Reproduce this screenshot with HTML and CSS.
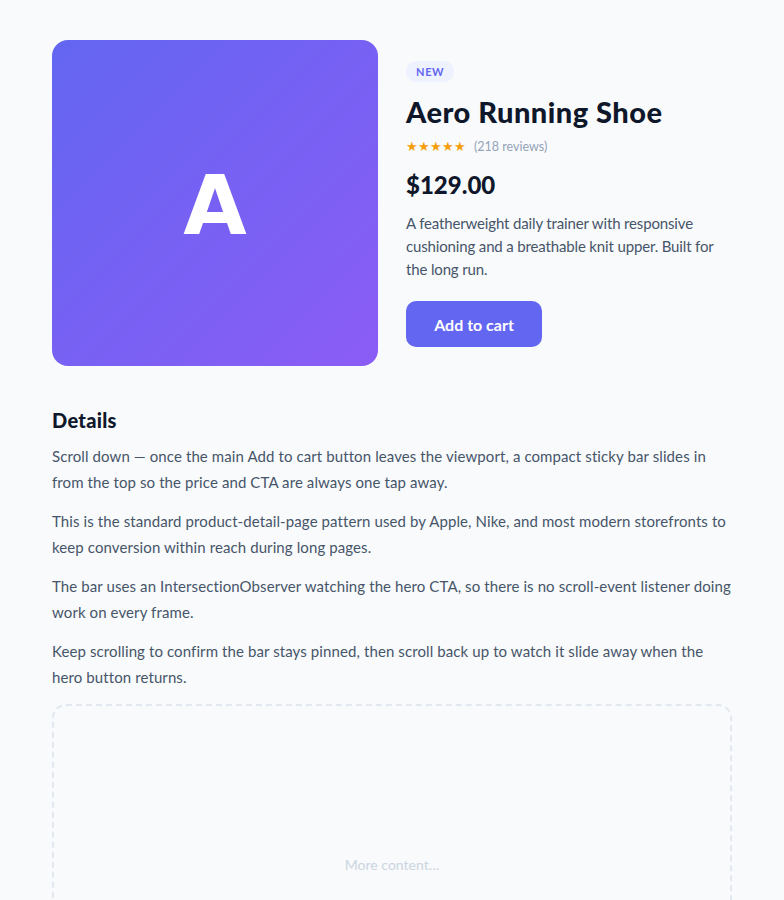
FILE: index.html
```html
<!DOCTYPE html>
<html lang="en">
<head>
<meta charset="utf-8">
<title>Aero Running Shoe</title>
<link rel="stylesheet" href="styles.css">
</head>
<body>
<main class="page">
  <section class="hero">
    <div class="image"><span class="image-letter">A</span></div>
    <div class="info">
      <span class="badge">NEW</span>
      <h1 class="title">Aero Running Shoe</h1>
      <div class="rating"><span class="stars">★★★★★</span><span class="reviews">(218 reviews)</span></div>
      <div class="price">$129.00</div>
      <p class="desc">A featherweight daily trainer with responsive cushioning and a breathable knit upper. Built for the long run.</p>
      <button class="cta" type="button">Add to cart</button>
    </div>
  </section>
  <section class="details">
    <h2 class="details-title">Details</h2>
    <p>Scroll down — once the main Add to cart button leaves the viewport, a compact sticky bar slides in from the top so the price and CTA are always one tap away.</p>
    <p>This is the standard product-detail-page pattern used by Apple, Nike, and most modern storefronts to keep conversion within reach during long pages.</p>
    <p>The bar uses an IntersectionObserver watching the hero CTA, so there is no scroll-event listener doing work on every frame.</p>
    <p>Keep scrolling to confirm the bar stays pinned, then scroll back up to watch it slide away when the hero button returns.</p>
    <div class="more">More content…</div>
  </section>
</main>
</body>
</html>
```
FILE: styles.css
```css
* { box-sizing: border-box; }
html, body { margin: 0; padding: 0; }
body {
  background: #f8fafc;
  font-family: Lato, "Noto Sans", sans-serif;
  color: #0f172a;
}
.page {
  max-width: 680px;
  margin: 0 auto;
  padding: 40px 0 40px;
}
.hero {
  display: grid;
  grid-template-columns: 1fr 1fr;
  gap: 28px;
}
.image {
  aspect-ratio: 1 / 1;
  border-radius: 16px;
  background: linear-gradient(135deg, #6366f1, #8b5cf6);
  display: flex;
  align-items: center;
  justify-content: center;
}
.image-letter {
  color: #fff;
  font-family: "DejaVu Sans", sans-serif;
  font-size: 82px;
  font-weight: 700;
  line-height: 1;
  margin-top: 6px;
}
.info {
  padding-top: 21px;
  display: flex;
  flex-direction: column;
  align-items: flex-start;
}
.badge {
  display: inline-block;
  background: #eef2ff;
  color: #6366f1;
  font-size: 11px;
  font-weight: 700;
  letter-spacing: 0.06em;
  padding: 4px 10px;
  border-radius: 999px;
  line-height: 13px;
}
.title {
  margin: 12px 0 0;
  font-size: 29px;
  font-weight: 900;
  letter-spacing: 0.5px;
  line-height: 36px;
  color: #0f172a;
}
.rating {
  margin-top: 8px;
  display: flex;
  align-items: center;
  gap: 8px;
  font-size: 12.5px;
  line-height: 18px;
}
.stars { color: #f59e0b; font-size: 12.5px; }
.reviews { color: #94a3b8; }
.price {
  margin-top: 14px;
  font-size: 24px;
  font-weight: 900;
  line-height: 30px;
}
.desc {
  margin: 12px 0 0;
  font-size: 15px;
  letter-spacing: -0.15px;
  line-height: 23px;
  color: #475569;
}
.cta {
  margin-top: 20px;
  width: 136px;
  height: 46px;
  border: 0;
  border-radius: 10px;
  background: #6366f1;
  color: #fff;
  font-family: inherit;
  font-size: 16px;
  font-weight: 700;
  cursor: pointer;
}
.details { margin-top: 41px; }
.details-title {
  margin: 0 0 10px;
  font-size: 20px;
  font-weight: 900;
  letter-spacing: 0.3px;
  line-height: 26px;
}
.details p {
  margin: 0 0 13px;
  font-size: 15px;
  letter-spacing: 0.1px;
  line-height: 26px;
  color: #475569;
}
.more {
  margin-top: 14px;
  height: 320px;
  border: 2px dashed #e2e8f0;
  border-radius: 14px;
  display: flex;
  align-items: center;
  justify-content: center;
  color: #cbd5e1;
  font-size: 14px;
}
```
